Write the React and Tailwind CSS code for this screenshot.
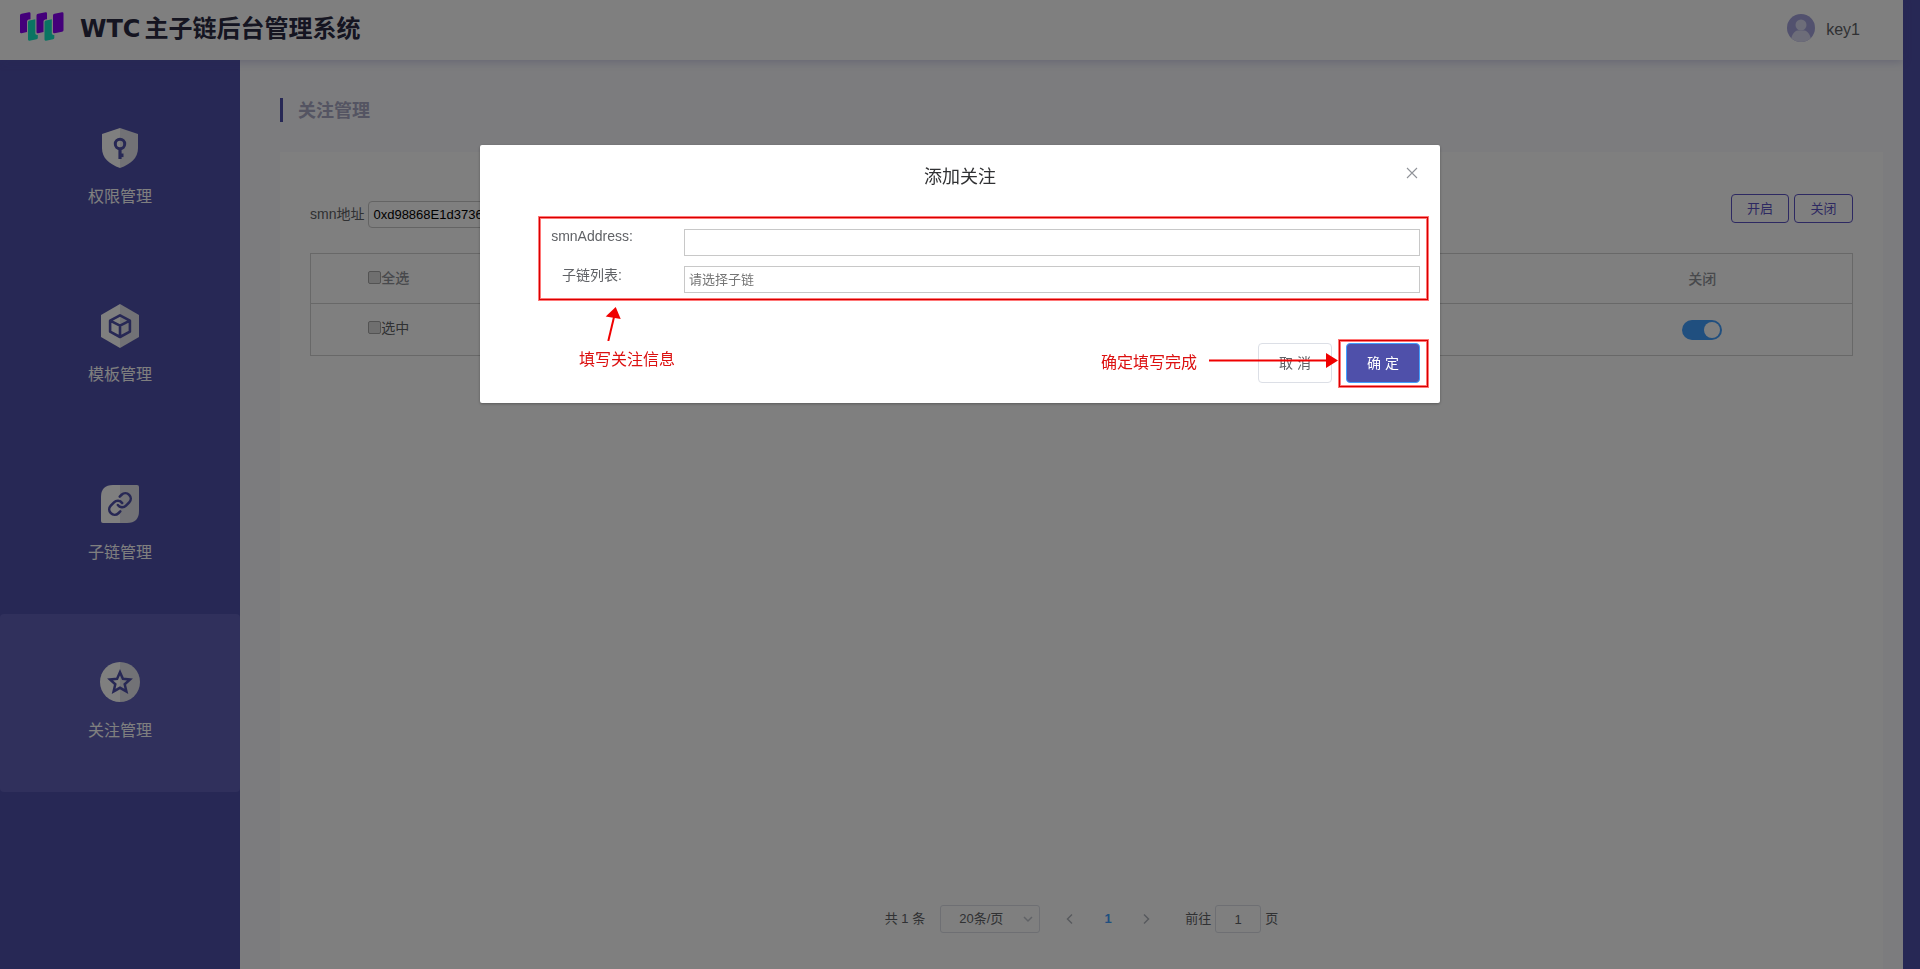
import React from "react";

const INK = "#4f50aa";

function Logo() {
  return (
    <svg width="44" height="30" viewBox="0 0 44 30" aria-hidden="true">
      <g fill="#14e8c4">
        <path d="M9.500 8.600 L15.300 7.300 L15.300 21.500 Q15.300 23.200 17.800 22.900 V26 Q17.800 27 16.600 27.200 L9.500 28.700 Q8 29 8 27.600 V10.200 Q8 8.900 9.500 8.600Z" />
        <path d="M26 8.600 L31.800 7.300 L31.800 21.500 Q31.800 23.200 34.300 22.900 V26 Q34.300 27 33.100 27.200 L26 28.700 Q24.500 29 24.500 27.600 V10.200 Q24.500 8.900 26 8.600Z" />
      </g>
      <g fill="#8800f4">
        <path d="M1.600 1.800 L9 0.300 Q10.500 0 10.500 1.500 V7.200 L8.600 7.600 Q7 8 7 9.600 V20 L1.600 21.300 Q0 21.500 0 20 V3.500 Q0 2.100 1.600 1.800Z" />
        <path d="M18 1.800 L25.500 0.300 Q27 0 27 1.500 V7.200 L25.100 7.600 Q23.500 8 23.500 9.600 V20 L18 21.300 Q16.500 21.500 16.500 20 V3.500 Q16.500 2.100 18 1.800Z" />
        <path d="M34.500 1.800 L42 0.300 Q43.500 0 43.500 1.500 V18.200 Q43.500 19.400 42 19.700 L34.500 21.300 Q33 21.500 33 20 V3.500 Q33 2.100 34.500 1.800Z" />
      </g>
    </svg>
  );
}

function ShieldIcon() {
  return (
    <svg width="36" height="40" viewBox="0 0 36 40" aria-hidden="true">
      <path d="M18 0 L0 6 V20 C0 30 7 36 18 40Z" fill="#fff" />
      <path d="M18 0 L36 6 V20 C36 30 29 36 18 40Z" fill="#e4e4ec" />
      <circle cx="18" cy="16" r="4.700" fill="none" stroke={INK} strokeWidth="3" />
      <path d="M18 20.500 V31" fill="none" stroke={INK} strokeWidth="3.200" />
      <path d="M18 27.300 H21.500" fill="none" stroke={INK} strokeWidth="3.600" />
    </svg>
  );
}

function CubeIcon() {
  return (
    <svg width="38" height="44" viewBox="0 0 38 44" aria-hidden="true">
      <path d="M19 0 L0 11 V33 L19 44Z" fill="#fff" />
      <path d="M19 0 L38 11 V33 L19 44Z" fill="#e4e4ec" />
      <path d="M19 11.300 L28.900 16.700 V27.600 L19 33 L9.100 27.600 V16.700Z M9.100 16.700 L19 21.700 L28.900 16.700 M19 21.700 V33" fill="none" stroke={INK} strokeWidth="2.600" strokeLinejoin="round" />
    </svg>
  );
}

function LinkIcon() {
  return (
    <svg width="38" height="38" viewBox="0 0 38 38" aria-hidden="true">
      <path d="M19 0 H12 Q0 0 0 12 V36 Q0 38 2 38 H19Z" fill="#fff" />
      <path d="M19 0 H36 Q38 0 38 2 V26 Q38 38 26 38 H19Z" fill="#e4e4ec" />
      <g transform="translate(6.040 6.040) scale(1.080)" fill="none" stroke={INK} strokeWidth="2.400" strokeLinecap="round" strokeLinejoin="round">
        <path d="M10 13a5 5 0 0 0 7.540.540l3-3a5 5 0 0 0-7.070-7.070l-1.720 1.710" />
        <path d="M14 11a5 5 0 0 0-7.540-.540l-3 3a5 5 0 0 0 7.070 7.070l1.710-1.710" />
      </g>
    </svg>
  );
}

function StarIcon() {
  return (
    <svg width="40" height="40" viewBox="0 0 40 40" aria-hidden="true">
      <path d="M20 0 A20 20 0 0 0 20 40Z" fill="#fff" />
      <path d="M20 0 A20 20 0 0 1 20 40Z" fill="#e4e4ec" />
      <path d="M20 10.200 L22.900 16.800 L30 17.500 L24.700 22.300 L26.400 29.400 L20 25.800 L13.600 29.400 L15.300 22.300 L10 17.500 L17.100 16.800Z" fill="none" stroke={INK} strokeWidth="2.500" />
    </svg>
  );
}

function Avatar() {
  return (
    <svg width="28" height="28" viewBox="0 0 28 28" aria-hidden="true">
      <clipPath id="face">
        <circle cx="14" cy="14" r="14" />
      </clipPath>
      <g clipPath="url(#face)">
        <rect width="28" height="28" fill="#a4a3dc" />
        <circle cx="14" cy="11" r="5.500" fill="#dadaf2" />
        <path d="M4 28 C4 20.500 7.500 17 10.500 16.500 H17.500 C20.500 17 24 20.500 24 28Z" fill="#dadaf2" />
      </g>
    </svg>
  );
}

function Chevron({ d }) {
  return (
    <svg width="12" height="12" viewBox="0 0 12 12" fill="none" stroke="currentColor" strokeWidth="1.500" aria-hidden="true">
      <path d={d} />
    </svg>
  );
}

const NAV = [
  { label: "权限管理", Icon: ShieldIcon },
  { label: "模板管理", Icon: CubeIcon },
  { label: "子链管理", Icon: LinkIcon },
  { label: "关注管理", Icon: StarIcon, active: true },
];

function Header() {
  return (
    <header className="relative flex h-[60px] items-center justify-between bg-white pr-[43px] pl-5 shadow-[0_2px_8px_rgba(80,82,171,0.25)]">
      <div className="flex items-center gap-4">
        <div className="pb-[6px]">
          <Logo />
        </div>
        <h1 className="flex items-baseline gap-1 pb-[2px] text-2xl leading-7 font-bold text-[#2a2a42]">
          <span className="font-['DejaVu_Sans',sans-serif]">WTC</span>
          <span>主子链后台管理系统</span>
        </h1>
      </div>
      <div className="flex items-center gap-[11px]">
        <div className="pb-1">
          <Avatar />
        </div>
        <span className="text-base text-[#606266]">key1</span>
      </div>
    </header>
  );
}

function Sidebar() {
  return (
    <nav className="w-[240px] shrink-0 pt-5">
      {NAV.map(({ label, Icon, active }) => (
        <a
          key={label}
          href="#"
          className={
            active
              ? "flex h-[178px] flex-col items-center gap-[13px] rounded bg-[#6061b8] pt-[46px] text-base text-white"
              : "flex h-[178px] flex-col items-center gap-[13px] pt-[46px] text-base text-white"
          }
        >
          <span className="flex h-11 items-center">
            <Icon />
          </span>
          <span className="leading-7">{label}</span>
        </a>
      ))}
    </nav>
  );
}

function Tick({ children }) {
  return (
    <label className="inline-flex items-center">
      <input type="checkbox" className="size-[13px] appearance-none rounded-[2px] border border-[#a6a6a6] bg-[#dedede]" />
      {children}
    </label>
  );
}

function FollowTable() {
  return (
    <table className="mt-[25px] w-full table-fixed border-collapse border border-[#d0d0d0] text-sm">
      <colgroup>
        <col className="w-[156px]" />
        <col />
        <col className="w-[300px]" />
      </colgroup>
      <thead>
        <tr className="h-[50px] border-b border-[#d0d0d0] text-[#909399]">
          <th className="font-medium">
            <Tick>全选</Tick>
          </th>
          <th />
          <th className="font-medium">关闭</th>
        </tr>
      </thead>
      <tbody>
        <tr className="h-[52px] text-[#606266]">
          <td className="pb-[2px] text-center">
            <Tick>选中</Tick>
          </td>
          <td />
          <td>
            <div className="flex justify-center">
              <button type="button" role="switch" aria-checked="true" aria-label="关闭" className="flex h-5 w-10 items-center justify-end rounded-full bg-[#409eff] px-[2px]">
                <span className="size-4 rounded-full bg-white" />
              </button>
            </div>
          </td>
        </tr>
      </tbody>
    </table>
  );
}

function Pagination() {
  return (
    <div className="flex items-center justify-center text-[13px] text-[#606266]">
      <span>共 1 条</span>
      <div className="ml-[15px] grid items-center">
        <select aria-label="每页条数" className="col-start-1 row-start-1 h-7 w-[100px] appearance-none rounded-[3px] border border-[#dcdfe6] bg-white pl-[18px]">
          <option>20条/页</option>
        </select>
        <span className="pointer-events-none col-start-1 row-start-1 mr-[6px] justify-self-end text-[#c0c4cc]">
          <Chevron d="M2 4 L6 8 L10 4" />
        </span>
      </div>
      <button type="button" aria-label="上一页" className="ml-6 text-[#b0b4bc]">
        <Chevron d="M8 1.500 L3.500 6 L8 10.500" />
      </button>
      <button type="button" className="ml-[13px] w-[38px] font-bold text-[#409eff]">1</button>
      <button type="button" aria-label="下一页" className="ml-[13px] text-[#b0b4bc]">
        <Chevron d="M4 1.500 L8.500 6 L4 10.500" />
      </button>
      <label className="ml-[33px] flex items-center gap-1">
        前往
        <input type="text" defaultValue="1" className="h-7 w-[46px] rounded-[3px] border border-[#dcdfe6] bg-white text-center" />
        页
      </label>
    </div>
  );
}

function Main() {
  return (
    <main className="flex grow flex-col bg-[#f8f8fc] pt-[38px] pr-5 pl-10">
      <h2 className="flex h-6 items-center border-l-3 border-[#4f50aa] pt-[2px] pl-[15px] text-lg font-bold text-[#a8a8c4]">关注管理</h2>
      <section className="mt-[30px] flex grow flex-col bg-white px-[30px] pt-[42px] pb-9">
        <div className="flex items-start justify-between">
          <div className="flex items-center gap-1 pt-[7px] text-sm text-[#606266]">
            <label htmlFor="smn" className="pb-[2px]">smn地址</label>
            <input id="smn" type="text" defaultValue="0xd98868E1d37360" className="h-[27px] w-[320px] rounded border border-[#c8c8c8] bg-white px-1 text-[13px] text-black" />
          </div>
          <div className="flex gap-[5px] text-[13px] text-[#5b52c4]">
            <button type="button" className="h-[29px] w-[58px] rounded border border-[#5b52c4]">开启</button>
            <button type="button" className="h-[29px] w-[59px] rounded border border-[#5b52c4]">关闭</button>
          </div>
        </div>
        <FollowTable />
        <div className="grow" />
        <Pagination />
      </section>
    </main>
  );
}

function Callouts() {
  const frame = "absolute border border-[#d80000] shadow-[0_0_0_1px_#ff7878,inset_0_0_0_1px_#ff7878]";
  return (
    <div className="pointer-events-none absolute inset-0 text-base leading-6 text-[#dc1010]">
      <div className={frame + " top-[72px] right-3 left-[59px] h-[83px]"} />
      <div className={frame + " top-[195px] right-3 h-[47px] w-[89px]"} />
      <svg className="absolute top-[162px] left-[125px]" width="16" height="34" viewBox="0 0 16 34" aria-hidden="true">
        <path d="M3.300 34 L9.500 8" stroke="#f00000" strokeWidth="2" />
        <path d="M10.700 0 L15.700 12 L0.700 9.500Z" fill="#f00000" />
      </svg>
      <p className="absolute top-[203px] left-[99px]">填写关注信息</p>
      <p className="absolute top-[206px] right-[243px]">确定填写完成</p>
      <svg className="absolute top-[208px] right-[102px]" width="129" height="16" viewBox="0 0 129 16" aria-hidden="true">
        <path d="M0 7.500 H120" stroke="#f00000" strokeWidth="2" />
        <path d="M117 0 L129 7.500 L117 15Z" fill="#f00000" />
      </svg>
    </div>
  );
}

function FollowDialog() {
  return (
    <div role="dialog" aria-modal="true" aria-labelledby="dialog-title" className="relative w-1/2 rounded-[2px] bg-white px-5 pb-5 shadow-[0_1px_3px_rgba(0,0,0,0.3)]">
      <h2 id="dialog-title" className="pt-5 text-center text-lg leading-6 text-[#303133]">添加关注</h2>
      <button type="button" aria-label="关闭对话框" className="absolute top-5 right-5 p-[2px] text-[#909399]">
        <svg width="12" height="12" viewBox="0 0 12 12" stroke="currentColor" strokeWidth="1.100" aria-hidden="true">
          <path d="M1 1 L11 11 M11 1 L1 11" />
        </svg>
      </button>
      <form className="mt-7 grid grid-cols-[184px_1fr] text-sm text-[#606266]">
        <div className="flex flex-col text-center leading-[39px]">
          <label htmlFor="smn-address">smnAddress:</label>
          <label htmlFor="chain-list">子链列表:</label>
        </div>
        <div className="flex flex-col gap-[10px] pt-3 text-[13px]">
          <input id="smn-address" type="text" className="h-[27px] w-full border border-[#c8c8c8] px-1" />
          <input id="chain-list" type="text" placeholder="请选择子链" className="h-[27px] w-full border border-[#c8c8c8] px-1 placeholder:text-[#757575]" />
        </div>
      </form>
      <div className="mt-12 flex justify-end gap-[14px] text-sm">
        <button type="button" className="h-10 w-[74px] rounded border border-[#dcdfe6] bg-white text-[#606266]">取 消</button>
        <button type="button" className="h-10 w-[74px] rounded border border-[#409eff] bg-[#4f50aa] text-white">确 定</button>
      </div>
      <Callouts />
    </div>
  );
}

export default function App() {
  return (
    <div className="bg-[#4f50aa] pr-[17px] font-['Liberation_Sans','Noto_Sans_CJK_SC',sans-serif]">
      <div className="flex min-h-screen flex-col">
        <Header />
        <div className="flex grow">
          <Sidebar />
          <Main />
        </div>
      </div>
      <div className="fixed inset-0 flex items-start justify-center bg-black/50 pt-[15vh]">
        <FollowDialog />
      </div>
    </div>
  );
}
